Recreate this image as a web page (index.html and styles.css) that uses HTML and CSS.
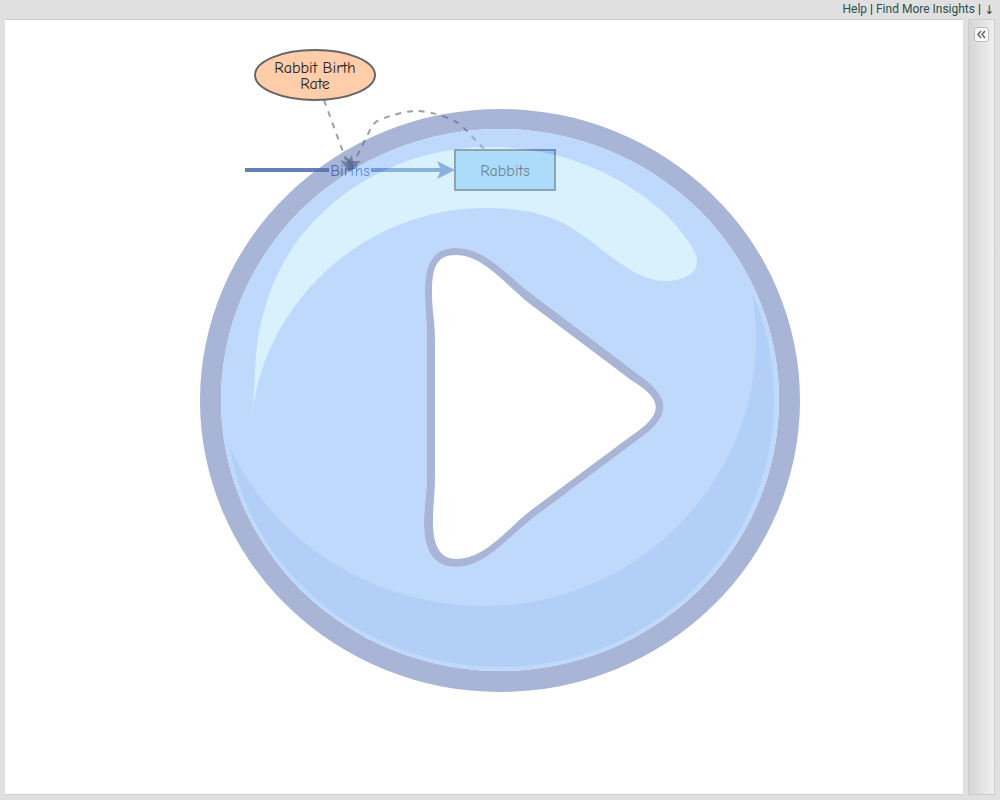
FILE: index.html
```html
<!DOCTYPE html>
<html lang="en">
<head>
<meta charset="utf-8">
<title>Rabbit Population</title>
<link rel="stylesheet" href="styles.css">
</head>
<body>
<div class="app">
  <nav class="topbar">
    <a href="#help">Help</a><span>|</span><a href="#insights">Find More Insights</a><span>|</span><a class="arrow" href="#download">↓</a>
  </nav>
  <div class="workspace">
    <main class="canvas">
      <svg class="diagram" role="img" aria-label="Rabbit population model">
        <g transform="translate(-5 -20)">
          <g class="link">
            <path d="M324 100L346 160"/>
            <path d="M484 149L462 126Q456 121 448 118Q430 111 415 111Q398 112 377 121Q373 124 370 130L354 162"/>
          </g>
          <path class="head" d="M349 172L340 160L347 162L352 155L354 167Z"/>
          <path class="head" d="M350 172L345 156L351 161L361 161Z"/>
          <path class="flow" d="M245 170H329M371 170H441"/>
          <path class="flow-head" d="M455 170L437 161L441 170L437 179Z"/>
          <text class="label flow-label" x="350" y="176">Births</text>
          <ellipse class="variable" cx="315" cy="75" rx="60" ry="25"/>
          <text class="label" x="315" y="73">Rabbit Birth</text>
          <text class="label" x="315" y="89">Rate</text>
          <rect class="stock" x="455" y="150" width="100" height="40"/>
          <text class="label" x="505" y="176">Rabbits</text>
        </g>
      </svg>
    </main>
    <aside class="side">
      <button class="expand" type="button" aria-label="Expand panel">
        <svg width="13" height="13" viewBox="0 0 13 13"><path d="M6 3L3 6.500L6 10M10 3L7 6.500L10 10"/></svg>
      </button>
    </aside>
  </div>
  <button class="play" type="button" aria-label="Run simulation">
    <svg viewBox="200 109 600 583">
      <path class="ring" fill-rule="evenodd" d="M200 400.500A300 291.500 0 1 1 800 400.500A300 291.500 0 1 1 200 400.500ZM221 400A279 271 0 1 0 779 400A279 271 0 1 0 221 400Z"/>
      <path class="body" fill-rule="evenodd" d="M221 400A279 271 0 1 1 779 400A279 271 0 1 1 221 400ZM456 248C434 248 425 262 425 291C425 310 427 322 427 337V477C427 492 424 504 424 523C424 552 435 567 456 567C486 567 509 536 533 518L647 433C669 415 669 399 647 381L533 295C509 277 486 248 456 248Z"/>
      <path class="shade" d="M230 447C275 545 375 606 485 606C634 606 756 486 756 338Q756 316 752 293C767 326 774 362 774 400C774 548 652 667 501 667C365 667 250 572 230 447Z"/>
      <path class="shine" d="M252 415C257 370 253 348 264 312C287 218 380 147 490 147C565 147 632 179 673 222C691 243 697 253 697 262C697 274 683 281 665 281C630 281 599 242 563 223C541 212 515 208 485 208C370 208 266 296 252 415Z"/>
      <path class="ring" fill-rule="evenodd" d="M456 248C434 248 425 262 425 291C425 310 427 322 427 337V477C427 492 424 504 424 523C424 552 435 567 456 567C486 567 509 536 533 518L647 433C669 415 669 399 647 381L533 295C509 277 486 248 456 248ZM456 255C484 255 508 287 530 304L631 380C664 400 664 414 631 436L530 511C508 528 486 559 456 559C440 559 433 545 433 523C433 504 435 492 435 477V340C435 322 432 310 432 293C432 268 436 255 456 255Z"/>
    </svg>
  </button>
</div>
</body>
</html>
```
FILE: styles.css
```css
* { box-sizing: border-box; }
body { margin: 0; background: #e0e0e0; }
.app {
  position: relative;
  display: flex;
  flex-direction: column;
  min-height: 100vh;
  padding: 0 5px 5px;
}
.topbar {
  display: flex;
  justify-content: flex-end;
  gap: 3px;
  height: 19px;
  padding-right: 1px;
  font: 12px/19px Tahoma, Roboto, sans-serif;
  color: #222;
}
.topbar a { color: #2a4f4f; text-decoration: none; }
.topbar .arrow { font-family: "Noto Sans", "DejaVu Sans", sans-serif; }
.workspace { flex: 1; display: flex; gap: 5px; }
.canvas {
  flex: 1;
  display: flex;
  background: #fff;
  border-top: 1px solid #ccc;
  border-bottom: 1px solid #ccc;
}
.diagram { flex: 1; width: 100%; }
.side {
  width: 27px;
  padding: 7px 5px;
  border: 1px solid #ccc;
  background: linear-gradient(to right, #d5d5d5, #f0f0f0);
}
.expand {
  display: flex;
  align-items: center;
  justify-content: center;
  width: 15px;
  height: 15px;
  padding: 0;
  border: 1px solid #bbb;
  border-radius: 3px;
  background: #fafafa;
}
.expand path { fill: none; stroke: #666; stroke-width: 1.500; }
.label {
  font: 16px "Comic Sans MS", "Comic Neue", "Comic Relief", "Open Sans", sans-serif;
  fill: #222;
  text-anchor: middle;
}
.flow-label { fill: #3f60ac; }
.link { fill: none; stroke: #a0a0a0; stroke-width: 2; stroke-dasharray: 6 6; }
.head { fill: #555; opacity: .6; }
.flow { fill: none; stroke: #6480b8; stroke-width: 4; }
.flow-head { fill: #6480b8; }
.variable { fill: #ffcdaa; stroke: #666; stroke-width: 2; }
.stock { fill: #a6d3f8; stroke: #666; stroke-width: 2; }
.play {
  position: absolute;
  inset: 0;
  margin: auto;
  width: 600px;
  height: 583px;
  padding: 0;
  border: 0;
  background: none;
  opacity: .5;
  cursor: pointer;
}
.play svg { display: block; width: 100%; height: 100%; }
.ring { fill: #546eaf; }
.body { fill: #7fb5f8; }
.shade { fill: #67a0f1; }
.shine { fill: #b3e5fd; }
```
